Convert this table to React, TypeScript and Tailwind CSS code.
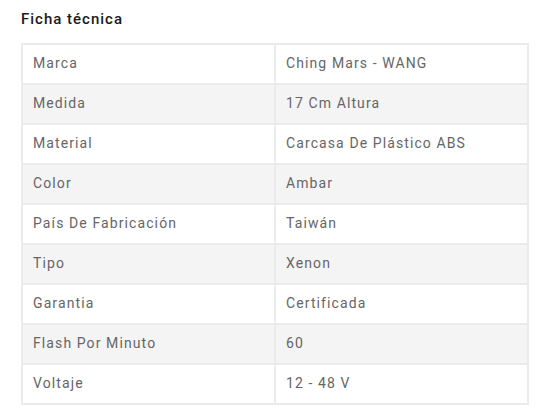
const rows: [string, string][] = [
  ["Marca", "Ching Mars - WANG"],
  ["Medida", "17 Cm Altura"],
  ["Material", "Carcasa De Plástico ABS"],
  ["Color", "Ambar"],
  ["País De Fabricación", "Taiwán"],
  ["Tipo", "Xenon"],
  ["Garantia", "Certificada"],
  ["Flash Por Minuto", "60"],
  ["Voltaje", "12 - 48 V"],
];

export default function App() {
  return (
    <div className="w-[538px] h-[415px] bg-white px-[21px] pt-[9px] font-['Roboto',sans-serif]">
      <h2 className="text-[15px] font-medium text-[#1a1a1a] tracking-[1px] leading-[20px] mb-[14px]">
        Ficha técnica
      </h2>
      <table className="w-[508px] border-collapse table-fixed">
        <tbody>
          {rows.map(([k, v], i) => (
            <tr key={k} className={i % 2 === 1 ? "bg-[#f4f4f4]" : "bg-white"}>
              <td className="h-[40px] border-2 border-[#ebebeb] pl-[10px] pb-[2px] text-[14px] text-[#666] tracking-[1.1px]">
                {k}
              </td>
              <td className="h-[40px] border-2 border-[#ebebeb] pl-[10px] pb-[2px] text-[14px] text-[#666] tracking-[1.1px]">
                {v}
              </td>
            </tr>
          ))}
        </tbody>
      </table>
    </div>
  );
}
